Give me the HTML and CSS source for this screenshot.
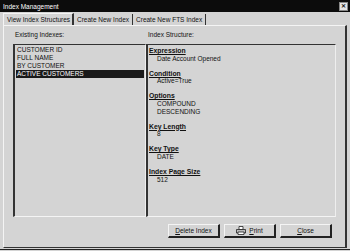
FILE: index.html
```html
<!DOCTYPE html>
<html lang="en">
<head>
  <meta charset="UTF-8">
  <title>Index Management</title>
  <link rel="stylesheet" href="styles.css">
</head>
<body>
  <div class="window">
    <div class="titlebar">
      <span class="title">Index Management</span>
      <span class="close">&#x2715;</span>
    </div>

    <div class="tabs">
      <div class="tab active">View Index Structures</div>
      <div class="tab">Create New Index</div>
      <div class="tab">Create New FTS Index</div>
    </div>

    <div class="panel">
      <div class="columns">
        <div class="col">
          <div class="label">Existing Indexes:</div>
          <ul class="listbox">
            <li>CUSTOMER ID</li>
            <li>FULL NAME</li>
            <li>BY CUSTOMER</li>
            <li class="selected">ACTIVE CUSTOMERS</li>
          </ul>
        </div>
        <div class="col">
          <div class="label">Index Structure:</div>
          <div class="structure">
            <div class="section">
              <div class="heading">Expression</div>
              <div class="value">Date Account Opened</div>
            </div>
            <div class="section">
              <div class="heading">Condition</div>
              <div class="value">Active=True</div>
            </div>
            <div class="section">
              <div class="heading">Options</div>
              <div class="value">COMPOUND</div>
              <div class="value">DESCENDING</div>
            </div>
            <div class="section">
              <div class="heading">Key Length</div>
              <div class="value">8</div>
            </div>
            <div class="section">
              <div class="heading">Key Type</div>
              <div class="value">DATE</div>
            </div>
            <div class="section">
              <div class="heading">Index Page Size</div>
              <div class="value">512</div>
            </div>
          </div>
        </div>
      </div>

      <div class="buttons">
        <button class="btn"><span><u>D</u>elete Index</span></button>
        <button class="btn">
          <svg class="printer" width="10" height="9" viewBox="0 0 10 9">
            <path d="M3 0.5h4v3h-4z" fill="#fff" stroke="#222" stroke-width="0.8"/>
            <path d="M0.5 3.5h9v3.5h-9z" fill="#bbb" stroke="#222" stroke-width="0.8"/>
            <path d="M2 6h6v2.5h-6z" fill="#fff" stroke="#222" stroke-width="0.8"/>
          </svg>
          <span><u>P</u>rint</span>
        </button>
        <button class="btn"><span><u>C</u>lose</span></button>
      </div>
    </div>
  </div>
</body>
</html>
```

FILE: styles.css
```css
body {
  margin: 0;
  background: #d4d4d4;
  font-family: "Liberation Sans", Arial, sans-serif;
  font-size: 6.5px;
  color: #111;
}

.window {
  width: 350px;
  height: 250px;
  box-sizing: border-box;
  display: flex;
  flex-direction: column;
  padding-bottom: 1px;
  border-bottom: 1px solid #222;
}

.titlebar {
  height: 12px;
  background: #0c0c0c;
  color: #fff;
  display: flex;
  justify-content: space-between;
  align-items: center;
  padding: 0 2px 0 3px;
  font-size: 6.5px;
}

.close {
  width: 7px;
  height: 7px;
  background: #e4e4e4;
  color: #111;
  border: 1px solid #888;
  font-size: 6px;
  line-height: 7px;
  text-align: center;
  font-weight: bold;
}

.tabs {
  display: flex;
  height: 12px;
  margin: 1px 0 0 3px;
}

.tab {
  display: flex;
  align-items: center;
  padding: 0 3px 0 3px;
  border-right: 1px solid #333;
  margin-top: 1px;
  white-space: nowrap;
}

.tab.active {
  margin-top: 0;
  padding: 0 3px 0 3px;
  width: 62px;
  border-top: 1px solid #f4f4f4;
  border-left: 1px solid #f4f4f4;
  border-right: 2px solid #333;
}

.panel {
  flex: 1;
  margin: 0 3px 0 3px;
  border-top: 1px solid #f4f4f4;
  border-left: 1px solid #f4f4f4;
  border-right: 2px solid #333;
  border-bottom: 1px solid #333;
  padding: 5px 9px 0 9px;
  display: flex;
  flex-direction: column;
}

.columns {
  display: grid;
  grid-template-columns: 133px 190px;
}

.label {
  height: 13px;
  line-height: 8px;
  padding-left: 2px;
}

.listbox {
  list-style: none;
  margin: 0;
  height: 173px;
  box-sizing: border-box;
  padding: 1px 1px 0 1px;
  border-top: 1px solid #333;
  border-left: 2px solid #333;
  border-right: 1px solid #eee;
  border-bottom: 1px solid #f4f4f4;
}

.listbox li {
  line-height: 8px;
  height: 8px;
  padding-left: 1px;
}

.listbox li.selected {
  background: #1a1a1a;
  color: #fff;
}

.structure {
  height: 173px;
  box-sizing: border-box;
  padding: 2px 0 0 1px;
  border-top: 1px solid #333;
  border-left: 2px solid #333;
  border-right: 1px solid #eee;
  border-bottom: 1px solid #f4f4f4;
}

.section {
  margin-bottom: 7.5px;
}

.heading {
  font-weight: bold;
  font-size: 6.8px;
  text-decoration: underline;
  line-height: 7.6px;
}

.value {
  padding-left: 8px;
  line-height: 7.6px;
}

.buttons {
  display: flex;
  justify-content: flex-end;
  gap: 4px;
  margin-top: 7px;
  padding-right: 4px;
}

.btn {
  width: 52px;
  height: 14px;
  padding: 0;
  background: #d4d4d4;
  font-family: inherit;
  font-size: 6.5px;
  color: #111;
  border-top: 1px solid #f4f4f4;
  border-left: 1px solid #f4f4f4;
  border-right: 2px solid #222;
  border-bottom: 2px solid #222;
  display: flex;
  align-items: center;
  justify-content: center;
  gap: 3px;
}

.printer {
  display: block;
}
```
